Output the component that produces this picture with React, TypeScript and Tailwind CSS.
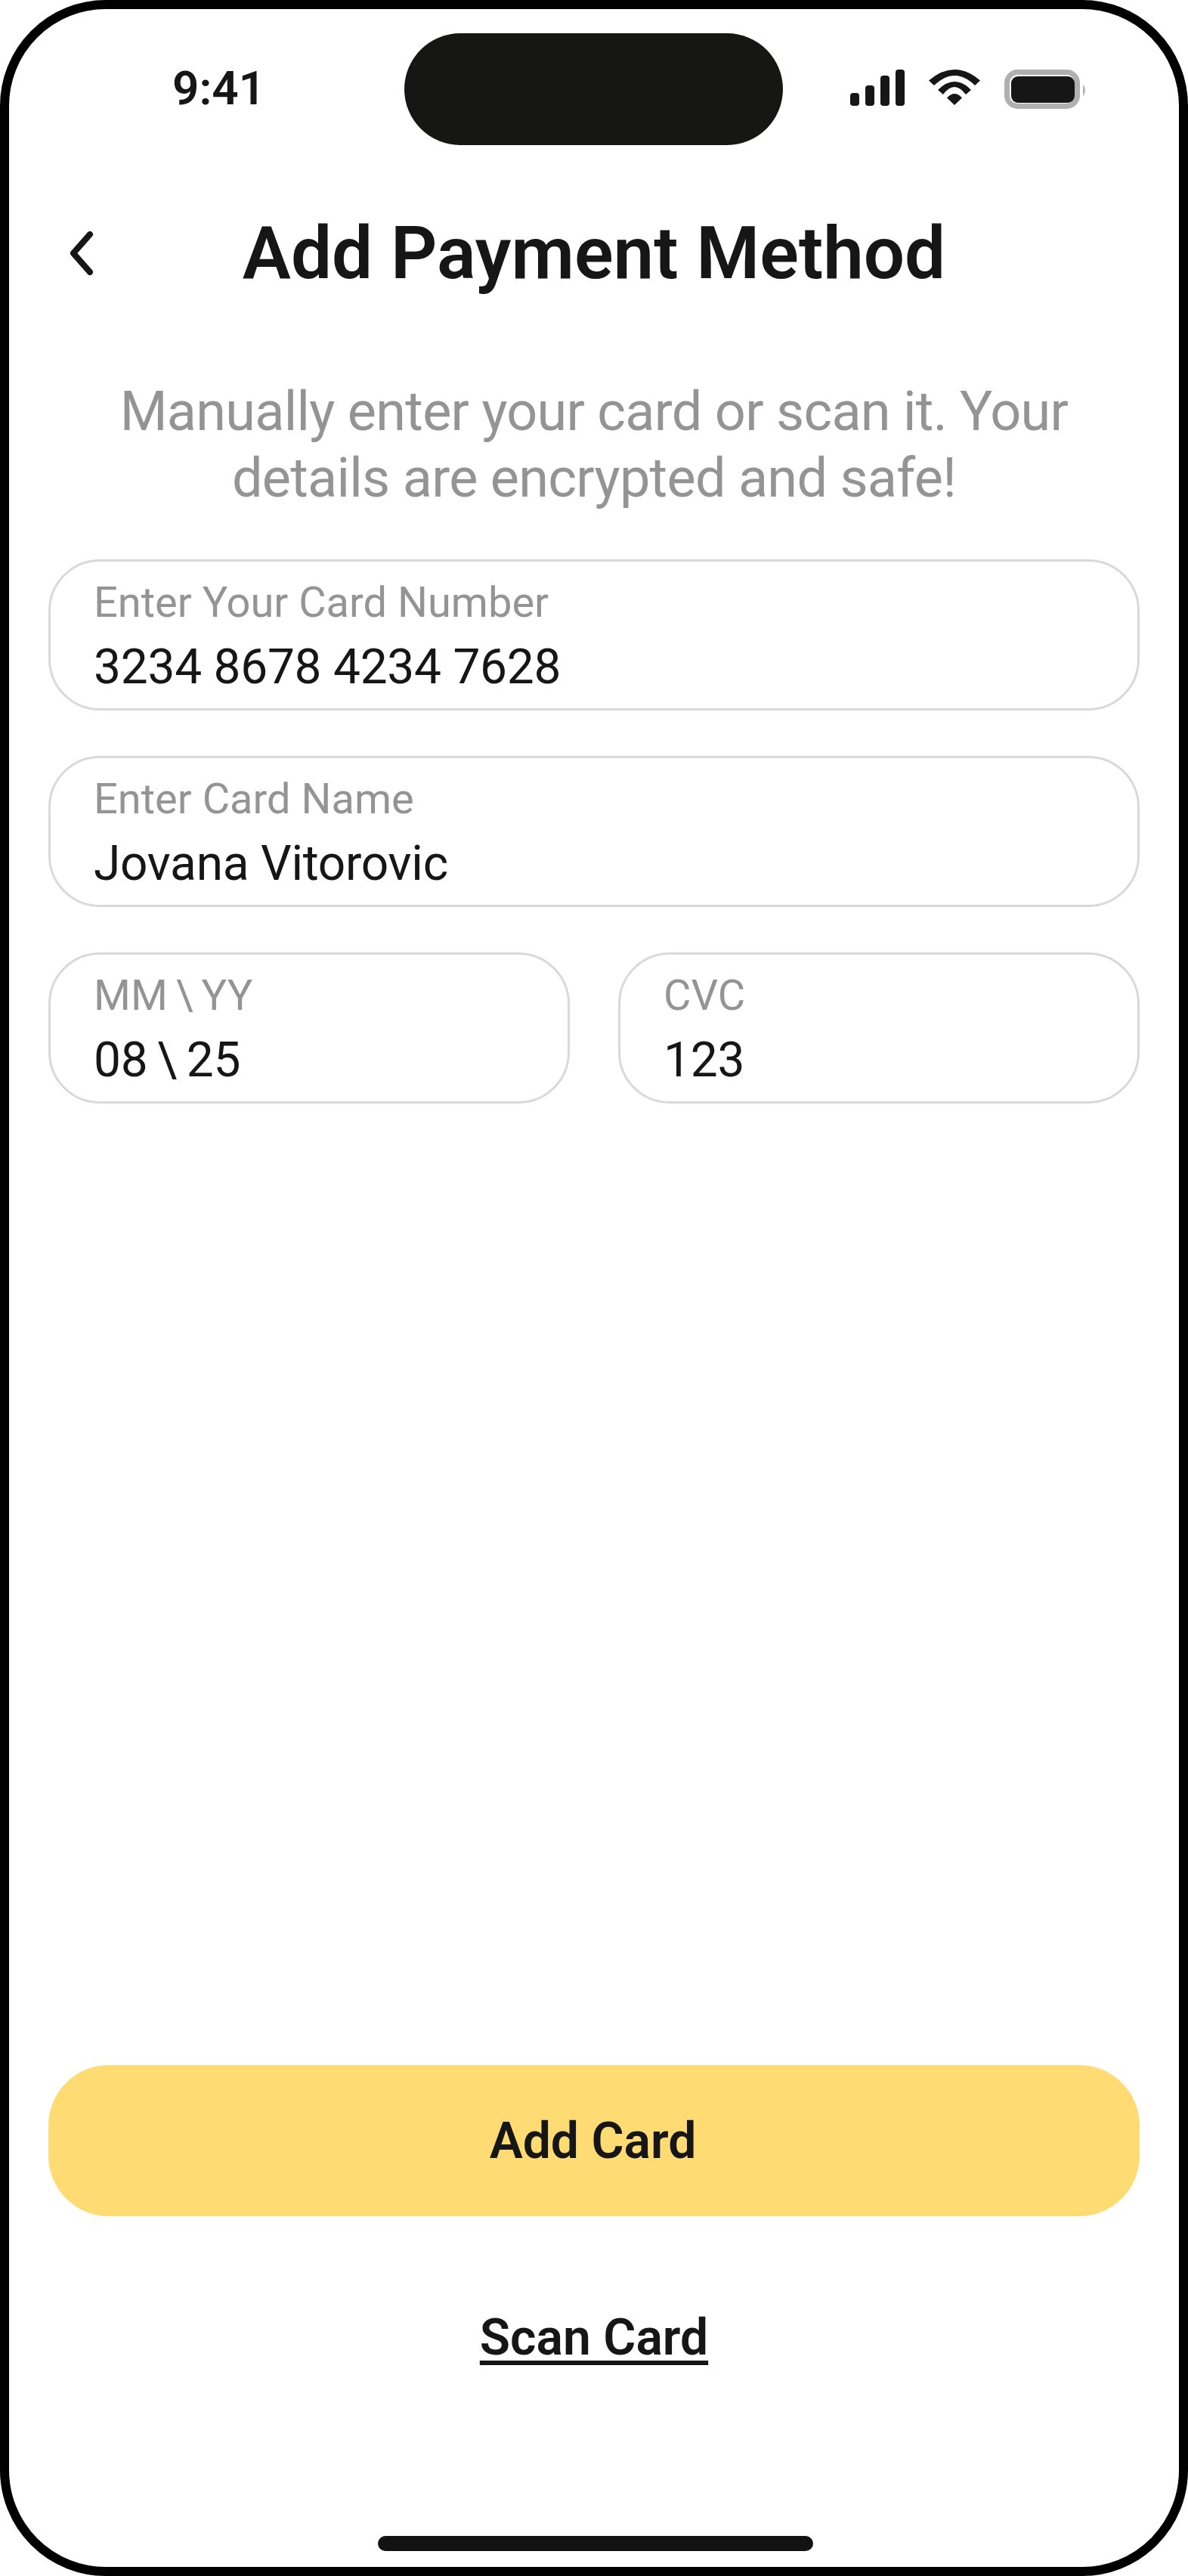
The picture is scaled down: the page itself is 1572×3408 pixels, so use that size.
import React from "react";

const font = "font-['Roboto','Liberation_Sans',sans-serif]";

function Field({ label, value, tight = false }: { label: string; value: string; tight?: boolean }) {
  return (
    <div className={`h-[200px] rounded-[68px] border-[3px] border-[#d9d9d9] pl-[57px] pt-[21px] flex flex-col ${tight ? "[word-spacing:-3px]" : ""}`}>
      <span className="text-[56px] leading-[66px] text-[#949494]">{label}</span>
      <span className="text-[64px] leading-[76px] tracking-[-0.004em] mt-[15px] text-[#161616]">{value}</span>
    </div>
  );
}

export default function App() {
  return (
    <div className={`w-[1572px] h-[3408px] border-[12px] border-black rounded-[140px] bg-white flex flex-col overflow-hidden ${font}`}>
      <div className="mt-[32px] h-[148px] grid grid-cols-[523px_501px_1fr] items-center">
        <div className="pl-[216px] text-[62px] leading-[70px] font-semibold text-[#161616] -mt-[3px]">9:41</div>
        <div className="h-[148px] rounded-full bg-[#161614]" />
        <div className="pl-[89px] flex items-start gap-[32px]">
          <svg width="72" height="48" viewBox="0 0 72 48" fill="#161616">
            <rect x="0" y="31" width="12" height="17" rx="4" />
            <rect x="20" y="21" width="12" height="27" rx="4" />
            <rect x="40" y="8" width="12" height="40" rx="4" />
            <rect x="60" y="0" width="12" height="48" rx="4" />
          </svg>
          <svg width="68" height="47" viewBox="0 0 68 47" fill="#161616">
            <path d="M34 47 L24 37.5 Q34 26.5 44 37.5 Z" />
            <path d="M12 27 Q34 5 56 27 L49 33 Q34 13 19 33 Z" />
            <path d="M0 14.5 Q34 -14.5 68 14.5 L61 21 Q34 -5 7 21 Z" />
          </svg>
          <svg width="110" height="52" viewBox="0 0 110 52">
            <rect x="3.5" y="3.5" width="93" height="45" rx="14" fill="none" stroke="#b0b0b0" strokeWidth="7" />
            <rect x="9" y="9" width="84" height="35" rx="9" fill="#161616" />
            <path d="M104 20 Q110 26 104 36 Z" fill="#b0b0b0" />
          </svg>
        </div>
      </div>

      <div className="mt-[88px] grid grid-cols-[1fr_auto_1fr] items-center h-[110px]">
        <div className="pl-[80px]">
          <svg width="38" height="62" viewBox="0 0 38 62" fill="none" stroke="#161616" strokeWidth="8" strokeLinecap="round" strokeLinejoin="round" className="block">
            <polyline points="27,6 5,31 27,56" />
          </svg>
        </div>
        <h1 className="text-[96px] leading-[110px] font-semibold text-[#161616]">Add Payment Method</h1>
        <div />
      </div>

      <p className="mt-[111px] text-center text-[72px] leading-[88px] tracking-[-0.01em] text-[#949494]">
        Manually enter your card or scan it. Your
        <br />
        details are encrypted and safe!
      </p>

      <div className="mt-[63px] mx-[52px] flex flex-col gap-[60px]">
        <Field label="Enter Your Card Number" value="3234 8678 4234 7628" />
        <Field label="Enter Card Name" value="Jovana Vitorovic" />
        <div className="grid grid-cols-2 gap-[64px]">
          <Field label="MM \ YY" value="08 \ 25" tight />
          <Field label="CVC" value="123" />
        </div>
      </div>

      <button className="mt-auto mx-[52px] pr-[3px] h-[200px] rounded-[80px] bg-[#ffdb73] text-[66px] font-semibold text-[#161616] shrink-0">
        Add Card
      </button>
      <a className="mt-[123px] self-center text-[66px] leading-[76px] font-semibold text-[#161616] underline underline-offset-[8px] decoration-[6px]">
        Scan Card
      </a>
      <div className="mt-[224px] mb-[21px] ml-[3px] self-center w-[576px] h-[20px] rounded-full bg-[#121212]" />
    </div>
  );
}
